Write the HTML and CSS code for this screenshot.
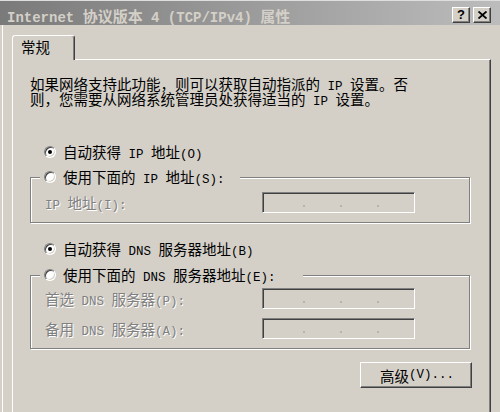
FILE: index.html
```html
<!DOCTYPE html>
<html lang="zh-CN">
<head>
<meta charset="utf-8">
<title>Internet 协议版本 4 (TCP/IPv4) 属性</title>
<link rel="stylesheet" href="styles.css">
</head>
<body>
<div class="window">
  <div class="titlebar">
    <div class="title"><span class="en">Internet </span>协议版本<span class="en"> 4 (TCP/IPv4) </span>属性</div>
    <div class="caption-btns">
      <div class="cbtn help">?</div>
      <div class="cbtn close">
        <svg width="9" height="8" viewBox="0 0 9 8"><path d="M0.5 0.5 L8.5 7.5 M8.5 0.5 L0.5 7.5" stroke="#000" stroke-width="1.8" fill="none"/></svg>
      </div>
    </div>
  </div>
  <div class="client">
    <div class="tabstrip"><div class="tab">常规</div></div>
    <div class="panel">
      <p class="intro">如果网络支持此功能，则可以获取自动指派的<span class="en"> IP </span>设置。否<br>则，您需要从网络系统管理员处获得适当的<span class="en"> IP </span>设置。</p>

      <div class="radio-row auto-ip"><span class="radio checked"></span><span>自动获得<span class="en"> IP </span>地址<span class="en">(O)</span></span></div>

      <fieldset class="group g1">
        <legend class="legend l1"><span class="radio"></span><span>使用下面的<span class="en"> IP </span>地址<span class="en">(S):</span></span></legend>
        <div class="field-row">
          <span class="label"><span class="en">IP </span>地址<span class="en">(I):</span></span>
          <div class="ipbox"><i></i><i></i><i></i></div>
        </div>
      </fieldset>

      <div class="radio-row auto-dns"><span class="radio checked"></span><span>自动获得<span class="en"> DNS </span>服务器地址<span class="en">(B)</span></span></div>

      <fieldset class="group g2">
        <legend class="legend l2"><span class="radio"></span><span>使用下面的<span class="en"> DNS </span>服务器地址<span class="en">(E):</span></span></legend>
        <div class="field-row">
          <span class="label">首选<span class="en"> DNS </span>服务器<span class="en">(P):</span></span>
          <div class="ipbox"><i></i><i></i><i></i></div>
        </div>
        <div class="field-row">
          <span class="label">备用<span class="en"> DNS </span>服务器<span class="en">(A):</span></span>
          <div class="ipbox"><i></i><i></i><i></i></div>
        </div>
      </fieldset>

      <div class="actions"><div class="button">高级<span class="en">(V)...</span></div></div>
    </div>
  </div>
</div>
</body>
</html>
```
FILE: styles.css
```css
* { box-sizing: border-box; }

body {
  margin: 0;
  width: 500px;
  height: 412px;
  overflow: hidden;
  background: #d4d0c8;
  color: #000;
  font-family: "Noto Sans CJK SC", sans-serif;
  font-size: 14.5px;
}

.en {
  font-family: "Liberation Mono", "Noto Sans CJK SC", monospace;
  font-size: 12.5px;
  line-height: 8px;
}

.window {
  width: 500px;
  height: 412px;
  overflow: hidden;
}

/* title bar */
.titlebar {
  height: 25px;
  border-top: 1px solid #dedede;
  background: linear-gradient(90deg, #7a7a7a, #bcbcbc);
  display: flex;
  justify-content: space-between;
  align-items: flex-start;
  padding: 0 9px 0 7px;
}

.title {
  font-weight: bold;
  color: #d4d0c8;
  font-size: 15px;
  line-height: 14px;
  padding-top: 8px;
  white-space: nowrap;
}

.title .en {
  font-size: 14px;
  font-weight: bold;
}

.caption-btns {
  display: flex;
  gap: 3px;
  margin-top: 6px;
}

.cbtn {
  width: 18px;
  height: 16px;
  background: #d4d0c8;
  border: 1px solid;
  border-color: #fff #404040 #404040 #fff;
  box-shadow: inset -1px -1px 0 #808080;
  display: flex;
  align-items: center;
  justify-content: center;
}

.help {
  font-family: "Liberation Sans", sans-serif;
  font-weight: bold;
  font-size: 13px;
  line-height: 1;
  padding-bottom: 1px;
}

/* client area */
.client {
  margin-left: 2px;
  border-left: 1px solid #fff;
  padding: 10px 0 0 9px;
  height: 387px;
}

.tabstrip {
  display: flex;
  margin-bottom: -1px;
  position: relative;
  z-index: 1;
}

.tab {
  width: 63px;
  height: 25px;
  border: 1px solid;
  border-bottom: 0;
  border-color: #fff #404040 transparent #fff;
  border-radius: 3px 3px 0 0;
  box-shadow: inset -1px 0 0 #808080;
  background: #d4d0c8;
  padding-left: 8px;
  line-height: 22px;
}

.panel {
  width: 479px;
  height: 400px;
  border-top: 1px solid #fff;
  border-left: 1px solid #fff;
  border-right: 1px solid #404040;
  box-shadow: inset -1px 0 0 #808080;
  padding: 16px 0 0 17px;
}

.intro {
  margin: 0;
  line-height: 15px;
  white-space: nowrap;
}

/* radios */
.radio-row {
  display: flex;
  align-items: center;
  gap: 7px;
  height: 12px;
  line-height: 12px;
  white-space: nowrap;
  margin-left: 14px;
}

.auto-ip { margin-top: 40px; }
.auto-dns { margin-top: 20px; }

.radio {
  flex: none;
  width: 12px;
  height: 12px;
  border-radius: 50%;
  background: #fff;
  border: 1px solid;
  border-color: #808080 #fff #fff #808080;
  box-shadow: inset 1px 1px 0 #404040, inset -1px -1px 0 #d4d0c8;
  display: flex;
  align-items: center;
  justify-content: center;
}

.radio.checked::after {
  content: "";
  width: 4px;
  height: 4px;
  border-radius: 50%;
  background: #000;
}

/* group boxes */
.group {
  width: 440px;
  min-width: 0;
  margin: 0;
  border: 1px solid #808080;
  box-shadow: 1px 1px 0 #fff, inset 1px 1px 0 #fff;
  padding: 5px 0 9px 14px;
}

.g1 { margin-top: 9px; }
.g2 { margin-top: 10px; padding-top: 3px; }

.legend {
  height: 20px;
  margin-left: -5px;
  padding: 0 0 0 4px;
  display: flex;
  align-items: center;
  gap: 7px;
  line-height: 12px;
  background: #d4d0c8;
  white-space: nowrap;
}

.l1 { width: 200px; }
.l2 { width: 263px; }

.field-row {
  display: flex;
  align-items: center;
  height: 21px;
}

.field-row + .field-row { margin-top: 9px; }

.label {
  width: 217px;
  color: #808080;
  text-shadow: 1px 1px 0 #fff;
  white-space: nowrap;
  line-height: 15px;
}

.ipbox {
  width: 153px;
  height: 21px;
  border: 1px solid;
  border-color: #808080 #fff #fff #808080;
  box-shadow: inset 1px 1px 0 #404040;
  display: flex;
  justify-content: space-evenly;
  align-items: flex-end;
  padding: 0 0 5px 5px;
}

.ipbox i {
  width: 2px;
  height: 2px;
  background: #b4b4b4;
}

/* button */
.actions {
  width: 442px;
  margin-top: 13px;
  display: flex;
  justify-content: flex-end;
}

.button {
  width: 112px;
  height: 26px;
  border: 1px solid;
  border-color: #fff #404040 #404040 #fff;
  box-shadow: inset -1px -1px 0 #808080;
  display: flex;
  align-items: center;
  justify-content: center;
  white-space: nowrap;
  padding-left: 2px;
  line-height: 15px;
}
```
